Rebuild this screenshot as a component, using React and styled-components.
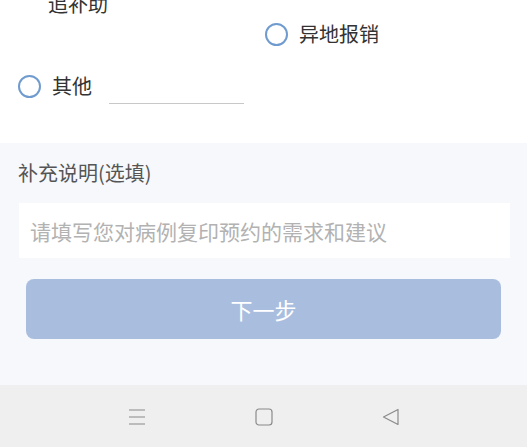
import React from 'react'
import styled, { createGlobalStyle } from 'styled-components'

const GlobalStyle = createGlobalStyle`
  html, body {
    margin: 0;
    padding: 0;
    background: #f6f8fb;
    font-family: 'Noto Sans CJK SC', 'Noto Sans', sans-serif;
  }
  * {
    box-sizing: border-box;
  }
`

const Screen = styled.div`
  width: 527px;
  height: 447px;
  display: flex;
  flex-direction: column;
  overflow: hidden;
`

const Content = styled.div`
  flex: 1;
  display: flex;
  flex-direction: column;
  overflow: hidden;
`

const ChoiceCard = styled.section`
  background: #fff;
  height: 143px;
  flex-shrink: 0;
  overflow: hidden;
  display: flex;
  flex-direction: column;
`

const WrappedLine = styled.div`
  padding-left: 48px;
  margin-top: -8px;
  font-size: 20px;
  line-height: 24px;
  color: #333;
`

const OptionRow = styled.div`
  display: flex;
  align-items: center;
  padding-left: ${p => p.$indent}px;
  margin-top: ${p => p.$top}px;
`

const Radio = styled.span`
  width: 23px;
  height: 23px;
  border: 2px solid #6f9bcf;
  border-radius: 50%;
  flex-shrink: 0;
`

const OptionLabel = styled.span`
  margin-left: 11px;
  font-size: 20px;
  line-height: 24px;
  color: #333;
`

const OtherInput = styled.span`
  width: 135px;
  height: 1px;
  background: #c8c8c8;
  margin-left: 17px;
  margin-top: 35px;
`

const Remarks = styled.section`
  display: flex;
  flex-direction: column;
`

const RemarksTitle = styled.div`
  padding-left: 18px;
  margin-top: 17px;
  font-size: 20px;
  line-height: 26px;
  color: #555;
`

const NoteBox = styled.div`
  margin: 17px 17px 0 19px;
  height: 55px;
  background: #fff;
  display: flex;
  align-items: center;
  padding-left: 11px;
  font-size: 21px;
  color: #b2b2b2;
`

const NextButton = styled.button`
  margin: 21px 26px 0 26px;
  height: 60px;
  border: none;
  border-radius: 8px;
  background: #a9bedf;
  color: #fff;
  font-family: inherit;
  font-size: 22px;
`

const NavBar = styled.nav`
  height: 62px;
  flex-shrink: 0;
  background: #efefef;
  display: flex;
  align-items: center;
  justify-content: center;
  gap: 109px;
  padding-top: 1px;
`

const NavIcon = styled.svg`
  width: 18px;
  height: 18px;
  display: block;
`

export default function App() {
  return (
    <Screen>
      <GlobalStyle />
      <Content>
        <ChoiceCard>
          <WrappedLine>追补助</WrappedLine>
          <OptionRow $indent={265} $top={6}>
            <Radio />
            <OptionLabel>异地报销</OptionLabel>
          </OptionRow>
          <OptionRow $indent={18} $top={22}>
            <Radio />
            <OptionLabel>其他</OptionLabel>
            <OtherInput />
          </OptionRow>
        </ChoiceCard>
        <Remarks>
          <RemarksTitle>补充说明(选填)</RemarksTitle>
          <NoteBox>请填写您对病例复印预约的需求和建议</NoteBox>
          <NextButton>下一步</NextButton>
        </Remarks>
      </Content>
      <NavBar>
        <NavIcon viewBox="0 0 18 18" fill="none" stroke="#8a8a8a" strokeWidth="1.2">
          <path d="M1 2h16M1 9h16M1 16h16" />
        </NavIcon>
        <NavIcon viewBox="0 0 18 18" fill="none" stroke="#8a8a8a" strokeWidth="1.2">
          <rect x="1" y="1" width="16" height="16" rx="3" />
        </NavIcon>
        <NavIcon viewBox="0 0 18 18" fill="none" stroke="#8a8a8a" strokeWidth="1.2">
          <path d="M16 1.5v15L1.5 9z" strokeLinejoin="round" />
        </NavIcon>
      </NavBar>
    </Screen>
  )
}
